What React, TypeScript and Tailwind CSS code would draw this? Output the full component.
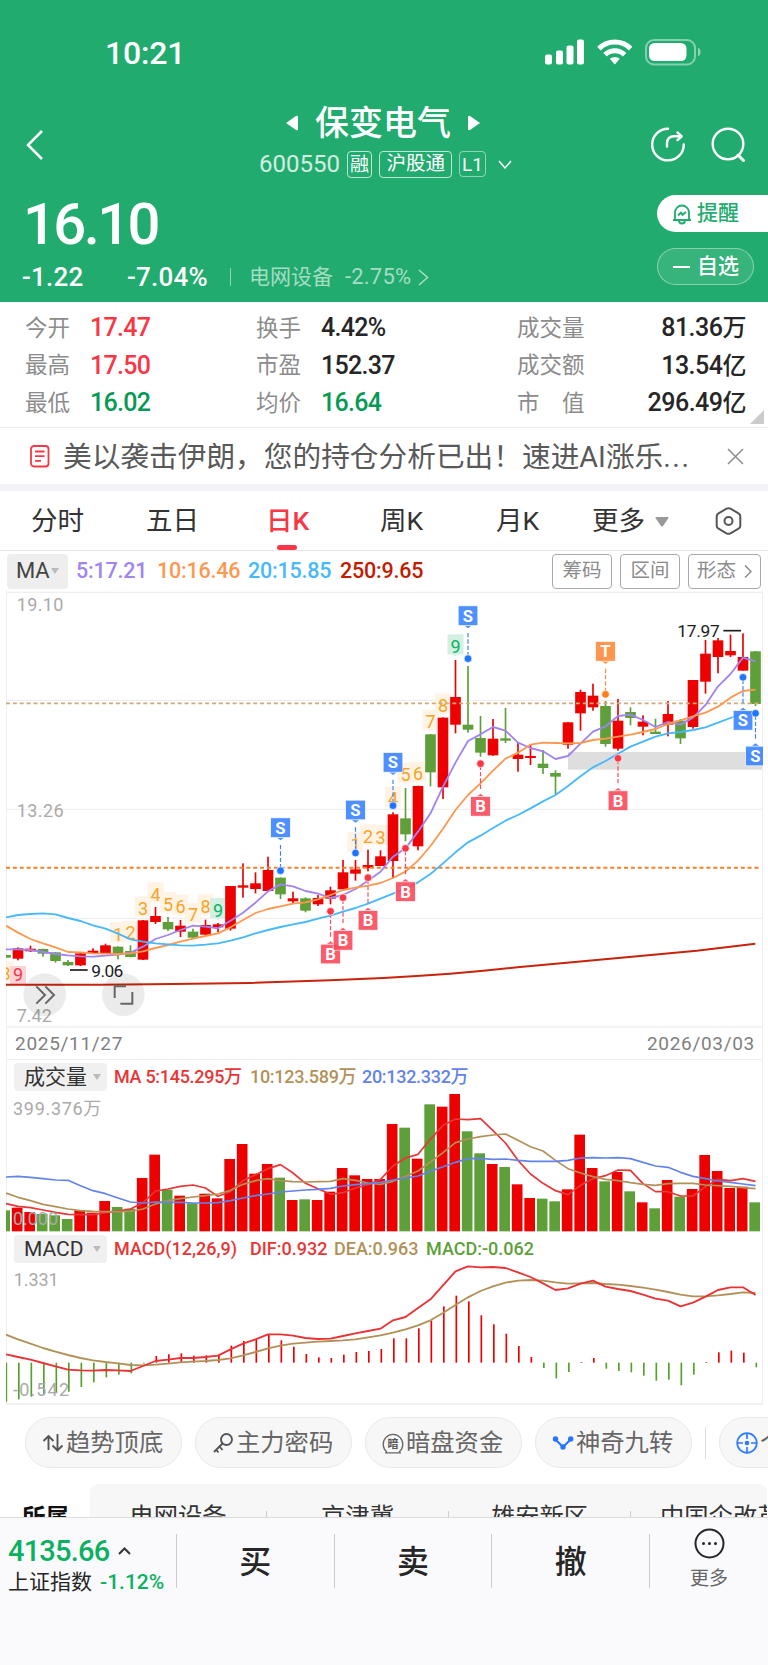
import type { ReactNode } from 'react'

interface Candle {
  up:     boolean
  high:   number
  top:    number
  bottom: number
  low:    number
}

// 'r' = 涨, 'g' = 跌; high / top / bottom / low in chart units (3 units = 1px)
const CANDLES: Candle[] = [
  'g 1095 1095 1103 1103', 'r 1072 1075 1106 1111', 'r 1067 1076 1084 1086', 'g 1076 1077 1091 1100',
  'g 1087 1087 1113 1118', 'g 1110 1116 1126 1128', 'r 1090 1090 1126 1128', 'r 1075 1082 1090 1092',
  'r 1061 1066 1089 1092', 'g 1069 1070 1094 1108', 'g 1066 1083 1101 1102', 'r 990 991 1109 1110',
  'r 951 978 996 1002', 'g 981 996 1018 1023', 'r 990 1007 1025 1041', 'g 1016 1025 1043 1045',
  'r 989 1005 1034 1036', 'r 999 1003 1012 1027', 'r 888 888 1016 1022', 'r 820 886 893 923',
  'r 847 880 897 910', 'r 800 840 903 906', 'g 862 863 913 927', 'r 905 925 934 941',
  'g 922 925 962 967', 'r 915 924 943 948', 'r 890 901 926 943', 'r 810 847 898 901',
  'r 810 838 851 872', 'r 779 825 834 844', 'r 781 799 828 828', 'r 667 673 813 865',
  'g 594 685 733 754', 'r 587 588 769 781', 'g 432 433 547 589', 'r 382 383 592 627',
  'r 210 321 404 430', 'g 228 404 419 428', 'g 378 444 488 500', 'r 387 446 496 497',
  'g 354 445 452 459', 'r 458 494 507 545', 'r 463 498 504 525', 'g 480 521 534 552',
  'g 541 549 560 612', 'r 396 397 464 476', 'r 299 306 370 422', 'r 281 317 352 362',
  'g 333 348 462 470', 'r 327 392 476 482', 'g 352 366 384 406', 'r 376 395 410 436',
  'g 386 425 432 432', 'r 333 372 404 439', 'g 387 392 445 462', 'r 270 270 411 416',
  'r 150 191 275 311', 'r 144 151 201 250', 'r 134 183 196 201', 'r 130 201 242 242',
  'g 183 184 342 348',
].map(row => {
  const [dir, high, top, bottom, low] = row.split(' ')
  return { up: dir === 'r', high: +high, top: +top, bottom: +bottom, low: +low }
})

const MA5 = [1078, 1078, 1080, 1086, 1092, 1096, 1099, 1100, 1097, 1094, 1088, 1070, 1047, 1035, 1020, 1007, 1010, 1015, 992, 968, 938, 904, 883, 889, 903, 911, 924, 915, 897, 872, 845, 800, 775, 725, 670, 590, 518, 453, 433, 411, 422, 458, 474, 484, 507, 498, 461, 425, 409, 378, 374, 390, 411, 396, 404, 383, 345, 289, 252, 203, 214]
const MA10 = [1007, 1028, 1047, 1060, 1072, 1086, 1087, 1090, 1091, 1092, 1090, 1084, 1074, 1065, 1055, 1046, 1038, 1030, 1012, 990, 969, 957, 949, 941, 937, 928, 915, 900, 893, 887, 879, 864, 845, 812, 768, 716, 660, 615, 580, 542, 506, 488, 464, 458, 459, 460, 459, 450, 446, 440, 434, 426, 417, 402, 391, 379, 368, 350, 323, 303, 299]
const MA20 = [982, 975, 972, 970, 973, 984, 993, 1006, 1016, 1031, 1048, 1055, 1060, 1063, 1066, 1067, 1064, 1060, 1052, 1042, 1030, 1020, 1011, 1003, 996, 986, 977, 965, 954, 941, 926, 911, 896, 877, 852, 820, 787, 757, 737, 714, 692, 675, 655, 634, 615, 588, 559, 532, 513, 491, 470, 455, 440, 430, 426, 420, 412, 398, 384, 371, 367]

const VOL = [541, 533, 546, 552, 556, 567, 541, 548, 513, 531, 536, 444, 374, 479, 497, 520, 491, 505, 387, 342, 431, 402, 443, 510, 508, 510, 485, 414, 436, 447, 447, 282, 293, 386, 223, 230, 192, 304, 370, 402, 411, 463, 504, 506, 514, 478, 314, 414, 454, 426, 484, 517, 535, 450, 500, 477, 375, 423, 474, 470, 517]
const VOL5 = [521, 529, 533, 540, 547, 553, 554, 554, 548, 543, 537, 518, 483, 477, 469, 465, 474, 499, 485, 452, 434, 416, 404, 429, 460, 476, 493, 488, 474, 464, 448, 408, 384, 373, 327, 286, 267, 269, 266, 302, 339, 391, 432, 460, 482, 494, 466, 446, 437, 420, 421, 461, 485, 485, 498, 498, 470, 448, 452, 446, 454]
const VOL10 = [489, 502, 512, 523, 530, 537, 542, 544, 545, 545, 544, 537, 522, 512, 506, 501, 497, 492, 481, 463, 452, 446, 452, 455, 456, 455, 454, 446, 451, 459, 463, 454, 439, 423, 396, 368, 338, 327, 320, 315, 312, 331, 350, 363, 391, 416, 429, 440, 448, 452, 458, 463, 466, 461, 460, 460, 465, 467, 469, 473, 476]
const VOL20 = [441, 439, 442, 446, 450, 451, 467, 482, 491, 504, 516, 519, 516, 517, 517, 519, 519, 518, 512, 504, 497, 492, 486, 483, 480, 478, 475, 468, 464, 461, 457, 450, 444, 438, 424, 410, 397, 386, 385, 388, 387, 391, 394, 394, 394, 391, 384, 383, 384, 383, 386, 397, 408, 412, 427, 439, 446, 453, 457, 462, 467]

const MACD = [1115, 1108, 1100, 1092, 1088, 1085, 1071, 1057, 1042, 1034, 1030, 1001, 978, 973, 970, 977, 976, 975, 947, 933, 928, 914, 931, 950, 972, 982, 984, 974, 966, 963, 957, 925, 925, 895, 872, 829, 797, 814, 856, 883, 911, 948, 981, 1014, 1045, 1026, 996, 984, 1016, 1023, 1027, 1037, 1052, 1049, 1066, 1034, 996, 967, 962, 968, 1012]
const DIF = [973, 981, 989, 999, 1009, 1019, 1021, 1022, 1020, 1021, 1023, 1008, 993, 989, 984, 984, 981, 977, 958, 941, 928, 913, 913, 917, 924, 927, 926, 918, 910, 903, 896, 871, 861, 834, 808, 766, 724, 709, 712, 711, 714, 727, 741, 760, 780, 775, 761, 752, 770, 777, 783, 794, 806, 812, 829, 818, 800, 780, 772, 772, 795]
const DEA = [914, 928, 941, 954, 965, 975, 984, 991, 996, 1000, 1005, 1006, 1004, 1001, 997, 995, 993, 990, 985, 976, 966, 955, 947, 941, 938, 935, 933, 931, 928, 922, 916, 908, 898, 886, 871, 849, 825, 802, 783, 769, 758, 752, 750, 752, 757, 761, 760, 759, 762, 764, 768, 773, 779, 786, 794, 799, 799, 796, 792, 787, 789]

// 九转序列: [index, digit, center y]
const NINE: [number, string, number][] = [
  [0, '8', 1150], [9, '1', 1032], [10, '2', 1028], [11, '3', 955], [12, '4', 912], [13, '5', 942],
  [14, '6', 950], [15, '7', 974], [16, '8', 949], [17, '9', 960], [28, '1', 762], [29, '2', 739],
  [30, '3', 741], [31, '4', 626], [32, '5', 554], [33, '6', 551], [34, '7', 395], [35, '8', 346],
  [36, '9', 169],
]

// 买卖点: [index, label, box center y, dot y]
const MARKS: [number, 'S' | 'B' | 'T', number, number][] = [
  [22, 'S', 713, 842], [28, 'S', 660, 789], [31, 'S', 517, 647], [37, 'S', 77, 206],
  [48, 'T', 184, 313], [59, 'S', 391, 262], [60, 'S', 498, 370],
  [26, 'B', 1092, 964], [27, 'B', 1051, 923], [29, 'B', 991, 863],
  [32, 'B', 905, 775], [38, 'B', 649, 521], [49, 'B', 632, 505],
]
const MARK_COLORS = {
  S: { box: '#3b84ff', dot: '#1f75ff' },
  B: { box: '#fa4b5c', dot: '#f93645' },
  T: { box: '#ff8a3c', dot: '#ff7d1a' },
}

const RED = '#ec0000'
const GREEN = '#5e9f3a'

const cx = (i: number) => 16.5 + 37.5 * i
const line = (ys: number[]) => ys.map((y, i) => `${i === 0 ? 18 : cx(i)},${y}`).join(' ')

function Line({ data, color, w = 5.5 }: { data: number[], color: string, w?: number }) {
  return <polyline points={line(data)} fill="none" stroke={color} strokeWidth={w} strokeLinejoin="round" />
}

function Mark({ i, label, y, dot }: { i: number, label: 'S' | 'B' | 'T', y: number, dot: number }) {
  const x = cx(i)
  const c = MARK_COLORS[label]
  const dir = dot > y ? 1 : -1
  const edge = y + dir * 29
  return (
    <g>
      <line x1={x} x2={x} y1={y + dir * 52} y2={dot} stroke={c.box} strokeWidth="3.5" strokeDasharray="13 6" />
      <circle cx={x} cy={dot} r="11.5" fill={c.dot} stroke="#fff" strokeWidth="2" />
      <g opacity="0.9">
        <path d={`M${x - 12} ${edge}L${x} ${edge + dir * 9}L${x + 12} ${edge}Z`} fill={c.box} />
        <rect x={x - 29.5} y={y - 29.5} width="59" height="59" fill={c.box} stroke="#fff" strokeWidth="2" />
      </g>
      <text x={x} y={y + 18} textAnchor="middle" fontSize="50" fontWeight="700" fill="#fff">{label}</text>
    </g>
  )
}

function KChart() {
  return (
    <svg viewBox="18 0 2271 1314" className="-mx-px block h-[438px] w-[757px]">
      {[7, 331, 658, 985, 1311].map(y => (
        <line key={y} x1="18" x2="2288" y1={y} y2={y} stroke="#efefef" strokeWidth="4" />
      ))}
      <rect x="1704" y="486" width="582" height="53" fill="#dedede" />
      <g fill="#aaa" fontSize="54">
        <text x="50" y="64" textLength="140">19.10</text>
        <text x="50" y="680" textLength="141">13.26</text>
        <text x="50" y="1296">7.42</text>
      </g>

      {NINE.map(([i, n, y]) => (
        <g key={i}>
          <rect x={cx(i) - 24} y={y - 36} width="48" height="60" fill={n === '9' ? '#d3f0e2' : '#fff3e6'} />
          <path d={`M${cx(i) - 9} ${y + 24}h18l-9 6z`} fill={n === '9' ? '#d3f0e2' : '#fff3e6'} />
          <text x={cx(i)} y={y + 20} textAnchor="middle" fontSize="54" fill={n === '9' ? '#0bb368' : '#f8a325'}>{n}</text>
        </g>
      ))}
      <rect x={cx(1) - 24} y="1128" width="48" height="54" fill="#fcd4d8" />
      <text x={cx(1)} y="1172" textAnchor="middle" fontSize="54" fill="#f23645">9</text>

      {CANDLES.map((c, i) => (
        <g key={i} fill={c.up ? RED : GREEN}>
          <rect x={cx(i) - 2.5} y={c.high} width="5" height={c.low - c.high} />
          <rect x={cx(i) - 16} y={c.top} width="32" height={c.bottom - c.top} />
        </g>
      ))}

      <line x1="18" x2="2280" y1="340" y2="340" stroke="#d2a978" strokeWidth="5" strokeDasharray="12 8.6" />
      <line x1="18" x2="2280" y1="833" y2="833" stroke="#f6802c" strokeWidth="6" strokeDasharray="12 8.6" />

      <Line data={MA5} color="#a183f2" />
      <Line data={MA10} color="#fd9850" />
      <Line data={MA20} color="#45b9fc" />
      <polyline
        points="18,1184 300,1184 520,1182 750,1179 990,1171 1150,1164 1250,1158 1350,1151 1450,1142 1560,1131 1700,1118 1920,1098 2090,1082 2266,1061"
        fill="none" stroke="#c8230c" strokeWidth="6"
      />

      {MARKS.map(([i, label, y, dot]) => <Mark key={i} i={i} label={label} y={y} dot={dot} />)}

      <g fill="#1c1c1c" fontSize="52">
        <line x1="210" x2="263" y1="1140" y2="1140" stroke="#1c1c1c" strokeWidth="5" />
        <text x="274" y="1161" textLength="96">9.06</text>
        <text x="2032" y="142" textLength="127">17.97</text>
        <line x1="2170" x2="2223" y1="122" y2="122" stroke="#1c1c1c" strokeWidth="5" />
      </g>

      <circle cx="134" cy="1214" r="64" fill="#000" opacity="0.08" />
      <path d="M109 1189l26 26l-26 26M136 1189l26 26l-26 26" fill="none" stroke="#666" strokeWidth="6" />
      <circle cx="370" cy="1214" r="64" fill="#000" opacity="0.08" />
      <path d="M378 1189h-34v35M397 1206v35h-36" fill="none" stroke="#666" strokeWidth="6" />
    </svg>
  )
}

function VolumeChart() {
  return (
    <svg viewBox="18 189 2271 417" className="-mx-px block h-[139px] w-[757px]">
      {VOL.map((y, i) => (
        <rect key={i} x={cx(i) - 18.5} y={y} width="32" height={604 - y} fill={CANDLES[i].up ? RED : GREEN} />
      ))}
      <Line data={VOL5} color="#e93535" w={5} />
      <Line data={VOL10} color="#b29159" w={5} />
      <Line data={VOL20} color="#6383ea" w={5} />
      <g fill="#aaa" fontSize="54">
        <text x="39" y="255" textLength="265">399.376万</text>
        <text x="39" y="585" textLength="135">0.000</text>
      </g>
    </svg>
  )
}

function MacdChart() {
  return (
    <svg viewBox="18 705 2271 420" className="-mx-px block h-[140px] w-[757px]">
      <line x1="18" x2="2288" y1="1122" y2="1122" stroke="#ececec" strokeWidth="5" />
      {MACD.map((y, i) => (
        <rect
          key={i} x={cx(i)} width="5"
          y={Math.min(y, 998)} height={Math.abs(y - 998)}
          fill={y < 998 ? RED : '#56a02c'}
        />
      ))}
      <Line data={DEA} color="#b29159" />
      <Line data={DIF} color="#ea3236" />
      <g fill="#aaa" fontSize="54">
        <text x="41" y="769" textLength="135">1.331</text>
        <text x="39" y="1099" textLength="168">-0.542</text>
      </g>
    </svg>
  )
}

function StatusBar() {
  return (
    <div className="flex h-[104px] items-center justify-between pl-[105px] pr-[67px] text-[32px] font-medium">
      <span className="mt-px tracking-[-0.200px]">10:21</span>
      <svg width="156" height="27" viewBox="0 0 156 27" fill="#fff">
        <rect x="0" y="15.5" width="7" height="10" rx="2" />
        <rect x="11" y="11.5" width="7" height="14" rx="2" />
        <rect x="21.5" y="6.5" width="7" height="19" rx="2" />
        <rect x="32" y="0.5" width="7" height="25" rx="2" />
        <g fill="none" stroke="#fff" strokeWidth="5">
          <path d="M54 9.6a22.5 22.5 0 0 1 31.600 0" />
          <path d="M60 15.800a14 14 0 0 1 19.600 0" />
        </g>
        <path d="M64.800 19.800a7.500 7.500 0 0 1 10 0l-5 5.700z" />
        <rect x="101" y="1" width="49" height="24.500" rx="8" fill="none" stroke="#fff" strokeWidth="2" opacity="0.45" />
        <rect x="104" y="4" width="37.500" height="18" rx="5.500" />
        <path d="M153 8.500c3.300 1 3.300 8 0 9z" opacity="0.5" />
      </svg>
    </div>
  )
}

function Header() {
  return (
    <header className="h-[302px] bg-[#21ab6e] text-white">
      <StatusBar />
      <div className="flex h-[82px] items-center">
        <svg width="20" height="30" viewBox="0 0 20 30" className="ml-[25px]" fill="none" stroke="#fff" strokeWidth="2.5">
          <path d="M17 1L3 15l14 14" />
        </svg>
        <div className="mb-[8px] ml-[214px] flex w-[253px] flex-col">
          <div className="flex items-center gap-[17px] pl-[27px]">
            <svg width="12" height="16" viewBox="0 0 12 16" fill="#fff"><path d="M0 8L10 1q2-1 2 1v12q0 2-2 1z" /></svg>
            <h1 className="text-[34px] font-medium leading-[38px]">保变电气</h1>
            <svg width="12" height="16" viewBox="0 0 12 16" fill="#fff"><path d="M12 8L2 1q-2-1-2 1v12q0 2 2 1z" /></svg>
          </div>
          <div className="mt-[8px] flex h-[28px] items-center">
            <span className="w-[88px] text-[24px] leading-none text-white/80">600550</span>
            <span className="flex h-[27px] w-[26px] items-center justify-center rounded border border-white/70 text-[19px] leading-none">融</span>
            <span className="ml-[7px] flex h-[27px] w-[73px] items-center justify-center rounded border border-white/70 text-[19.500px] leading-none">沪股通</span>
            <span className="ml-[7px] flex h-[26px] w-[27px] items-center justify-center rounded border border-white/50 text-[19px] leading-none">L1</span>
            <svg width="14" height="9" viewBox="0 0 14 9" className="ml-[12px] shrink-0" fill="none" stroke="#fff" strokeWidth="1.500"><path d="M1 1l6 7l6-7" /></svg>
          </div>
        </div>
        <svg width="36" height="36" viewBox="0 0 36 36" className="ml-[138px]" fill="none" stroke="#fff" strokeWidth="2.400" strokeLinecap="round" strokeLinejoin="round">
          <path d="M18 1.800A15.800 15.800 0 1 0 33.800 17.500" />
          <path d="M17 19.500v-3c0-5 3-7.300 7-7.300h7M27.500 5.500l4.200 3.800l-4.200 3.800" />
        </svg>
        <svg width="36" height="36" viewBox="0 0 36 36" className="ml-[24px]" fill="none" stroke="#fff" strokeWidth="2.400" strokeLinecap="round">
          <circle cx="18" cy="17" r="15.300" />
          <path d="M28 28l5.500 5.500" strokeWidth="3" />
        </svg>
      </div>

      <div className="flex h-[116px] justify-between">
        <div className="flex flex-col">
          <div className="ml-[23px] mt-[8px] h-[58px] text-[58px] font-medium leading-[60px] tracking-[-2.600px]">16.10</div>
          <div className="mt-[11px] flex h-[28px] items-center text-[26px] font-medium leading-none tracking-[0.200px]">
            <span className="ml-[22px] w-[105px]">-1.22</span>
            <span className="w-[103px]">-7.04%</span>
            <span className="h-[18px] w-px bg-white/50" />
            <span className="ml-[18px] w-[96px] text-[21px] font-normal tracking-normal text-white/60">电网设备</span>
            <span className="w-[73px] text-[22px] font-normal text-white/60">-2.75%</span>
            <svg width="11" height="17" viewBox="0 0 11 17" fill="none" stroke="#fff" strokeWidth="1.600" opacity="0.600"><path d="M1 1l8.500 7.500L1 16" /></svg>
          </div>
        </div>
        <div className="mt-[9px] flex w-[111px] flex-col">
          <div className="flex h-[37px] items-center gap-[5px] rounded-l-full bg-white pl-[15px] text-[21px] font-medium text-[#21ab6e]">
            <svg width="20" height="22" viewBox="0 0 20 22" fill="none" stroke="#21ab6e" strokeWidth="1.800" strokeLinejoin="round">
              <path d="M1 17h18M3 17V9.500a7 7 0 0 1 14 0V17M7 17.500a3 3 0 0 0 6 0" />
              <path d="M6 12.500l3-3l1.500 2.500l3.500-3" />
            </svg>
            提醒
          </div>
          <div className="mt-[16px] flex h-[37px] w-[97px] items-center gap-[7px] rounded-full border border-white/40 bg-white/10 pl-[15px] text-[21px] font-medium">
            <span className="h-[2px] w-[17px] bg-white" />
            自选
          </div>
        </div>
      </div>
    </header>
  )
}

function Stat({ label, value, color }: { label: string, value: string, color: string }) {
  return (
    <div className="flex h-[37.600px] items-center leading-none">
      <span className="w-[65px] text-[22.500px] text-[#8c8c8c]">{label}</span>
      <span className={`text-[25px] font-medium tracking-[-0.700px] ${color}`}>{value}</span>
    </div>
  )
}

function Stats() {
  const right = [['成交量', '81.36', '万'], ['成交额', '13.54', '亿'], ['市　值', '296.49', '亿']]
  return (
    <section className="relative flex h-[126px] border-b border-[#ebebeb] pt-[7px]">
      <div className="ml-[25px] w-[231px]">
        <Stat label="今开" value="17.47" color="text-[#f93645]" />
        <Stat label="最高" value="17.50" color="text-[#f93645]" />
        <Stat label="最低" value="16.02" color="text-[#069a55]" />
      </div>
      <div className="w-[261px]">
        <Stat label="换手" value="4.42%" color="text-[#262626]" />
        <Stat label="市盈" value="152.37" color="text-[#262626]" />
        <Stat label="均价" value="16.64" color="text-[#069a55]" />
      </div>
      <div className="w-[229px]">
        {right.map(([label, value, unit]) => (
          <div key={label} className="flex h-[37.600px] items-center justify-between leading-none">
            <span className="text-[22.500px] text-[#8c8c8c]">{label}</span>
            <span className="text-[25px] font-medium tracking-[-0.500px] text-[#262626]">{value}<span className="text-[24px]">{unit}</span></span>
          </div>
        ))}
      </div>
      <svg width="14" height="14" viewBox="0 0 14 14" className="absolute bottom-[3px] right-[4px]"><path d="M14 0v14H0z" fill="#ccc" /></svg>
    </section>
  )
}

function News() {
  return (
    <section className="flex h-[56px] items-center">
      <svg width="20" height="23" viewBox="0 0 20 23" className="ml-[30px]" fill="none" stroke="#f93645" strokeWidth="1.800">
        <rect x="1" y="1" width="17.500" height="20.500" rx="3" />
        <path d="M5 6.500h9.500M5 11.200h9.500M5 15.800h6" />
      </svg>
      <p className="ml-[13px] mt-[2px] w-[664px] whitespace-nowrap text-[28.700px] leading-none text-[#595959]">
        美以袭击伊朗，您的持仓分析已出！速进AI涨乐<span className="tracking-[1.500px]">...</span>
      </p>
      <svg width="17" height="17" viewBox="0 0 17 17" fill="none" stroke="#8c8c8c" strokeWidth="1.500"><path d="M1 1l15 15M16 1L1 16" /></svg>
    </section>
  )
}

function Tabs() {
  return (
    <nav className="flex h-[60px] items-center border-b border-[#e8e8e8] pt-[2px] text-[26.500px] leading-none text-[#333]">
      <span className="ml-[31px] w-[115px]">分时</span>
      <span className="w-[120px]">五日</span>
      <span className="relative w-[114px] font-medium text-[#f93645]">
        日K
        <span className="absolute -bottom-[15px] left-[11px] h-[5px] w-[20px] rounded bg-[#f93645]" />
      </span>
      <span className="w-[116px]">周K</span>
      <span className="w-[96px]">月K</span>
      <span className="w-[63px]">更多</span>
      <svg width="14" height="10" viewBox="0 0 14 10"><path d="M1 0h12q1 0 .5 1L8 9q-1 1-2 0L.500 1Q0 0 1 0z" fill="#999" /></svg>
      <svg width="27" height="28" viewBox="0 0 27 28" className="-mt-[2px] ml-[46px]" fill="none" stroke="#555" strokeWidth="2">
        <path d="M11.500 1.700q2-1 4 0l8 4.600q1.800 1 1.800 3v9.400q0 2-1.800 3l-8 4.600q-2 1-4 0l-8-4.600q-1.800-1-1.800-3V9.300q0-2 1.800-3z" />
        <circle cx="13.500" cy="14" r="4" />
      </svg>
    </nav>
  )
}

function MaRow() {
  return (
    <div className="flex h-[39px] items-center pt-px text-[21.500px] font-medium leading-none tracking-[-0.200px]">
      <div className="ml-[7px] flex h-[35px] w-[61px] items-center gap-[2px] rounded bg-[#eee] pl-[9px] text-[22px] font-normal text-[#444]">
        MA
        <svg width="8" height="6" viewBox="0 0 8 6"><path d="M0 0h8L4 6z" fill="#bbb" /></svg>
      </div>
      <span className="ml-[8px] w-[81px] text-[#a183f2]">5:17.21</span>
      <span className="w-[91px] text-[#fd9850]">10:16.46</span>
      <span className="w-[92px] text-[#45b9fc]">20:15.85</span>
      <span className="text-[#c41a00]">250:9.65</span>
      <div className="ml-auto mr-[7px] flex gap-[8px] text-[19.500px] font-normal tracking-normal text-[#8c8c8c]">
        <span className="flex h-[35px] w-[60px] items-center justify-center rounded border border-[#aaa]">筹码</span>
        <span className="flex h-[35px] w-[60px] items-center justify-center rounded border border-[#aaa]">区间</span>
        <span className="flex h-[35px] w-[73px] items-center justify-center gap-[8px] rounded border border-[#aaa]">
          形态
          <svg width="8" height="13" viewBox="0 0 8 13" fill="none" stroke="#8c8c8c" strokeWidth="1.500"><path d="M1 .500l6 6l-6 6" /></svg>
        </span>
      </div>
    </div>
  )
}

function IndicatorRow({ name, children }: { name: string, children: ReactNode }) {
  return (
    <div className="flex h-[33px] items-center pt-px text-[18px] font-medium leading-none">
      <div className="ml-[7px] mr-[7px] flex h-[28px] w-[93px] items-center justify-between rounded bg-[#f0f0f0] pl-[10px] pr-[6px] text-[21px] font-normal text-[#333]">
        {name}
        <svg width="8" height="6" viewBox="0 0 8 6"><path d="M0 0h8L4 6z" fill="#bbb" /></svg>
      </div>
      {children}
    </div>
  )
}

function Pill({ icon, text }: { icon: ReactNode, text: string }) {
  return (
    <div className="flex h-[51px] w-[157px] shrink-0 items-center gap-[2px] whitespace-nowrap rounded-full border border-[#e8e8e8] bg-[#f7f7f7] pl-[16px] pt-px text-[24.300px] leading-none text-[#666]">
      {icon}
      {text}
    </div>
  )
}

function Pills() {
  return (
    <div className="mt-[12px] flex gap-[13px] overflow-hidden pl-[25px]">
      <Pill text="趋势顶底" icon={
        <svg width="22" height="22" viewBox="0 0 22 22" fill="none" stroke="#555" strokeWidth="1.900">
          <path d="M6.500 18V4M1.500 9l5-5l5 5M15.500 2v16.500M10.500 13.500l5 5l5-5" />
        </svg>
      } />
      <Pill text="主力密码" icon={
        <svg width="22" height="22" viewBox="0 0 22 22" fill="none" stroke="#555" strokeWidth="1.900">
          <circle cx="14.500" cy="7.500" r="5.500" />
          <path d="M10.500 11.500L2 20M7.500 14.500l3 3.500M4 17.500l2.500 3" />
        </svg>
      } />
      <Pill text="暗盘资金" icon={
        <svg width="22" height="22" viewBox="0 0 22 22">
          <path d="M5 20A9.800 9.800 0 1 1 17 20M3 20.800h16" fill="none" stroke="#666" strokeWidth="1.300" />
          <text x="11" y="15.500" textAnchor="middle" fontSize="11" fontWeight="700" fill="#555">暗</text>
        </svg>
      } />
      <Pill text="神奇九转" icon={
        <svg width="22" height="22" viewBox="0 0 22 22" fill="#2673ff">
          <path d="M3 7l8 8l8-8" fill="none" stroke="#2673ff" strokeWidth="2" />
          <circle cx="3.500" cy="7" r="2.700" /><circle cx="18.700" cy="7" r="2.700" /><circle cx="11" cy="15" r="2.700" />
        </svg>
      } />
      <span className="mt-[10px] h-[32px] w-px shrink-0 bg-[#ddd]" />
      <Pill text="个股" icon={
        <svg width="22" height="22" viewBox="0 0 22 22" fill="none" stroke="#2f7bff" strokeWidth="1.700">
          <circle cx="11" cy="11" r="9.800" />
          <path d="M11 1v6M11 15v6M1 11h6M15 11h6" />
          <circle cx="11" cy="11" r="1.500" fill="#2f7bff" />
        </svg>
      } />
    </div>
  )
}

function Plates() {
  return (
    <div className="mt-[16px] flex h-[33px] overflow-hidden whitespace-nowrap text-[24.300px] text-[#333]">
      <span className="w-[90px] shrink-0 pl-[22px] text-[23.500px] font-bold leading-[69px] text-[#111]">所属</span>
      <div className="flex h-[65px] w-[677px] shrink-0 items-center overflow-hidden rounded-lg bg-[#f7f7f7] leading-none">
        <span className="w-[176px] shrink-0 pt-px text-center">电网设备</span>
        <span className="h-[11px] w-px shrink-0 bg-[#ccc]" />
        <span className="w-[181px] shrink-0 pt-px text-center">京津冀</span>
        <span className="h-[11px] w-px shrink-0 bg-[#ccc]" />
        <span className="w-[181px] shrink-0 pt-px text-center">雄安新区</span>
        <span className="h-[11px] w-px shrink-0 bg-[#ccc]" />
        <span className="shrink-0 pl-[29px] pt-px">中国企改革</span>
      </div>
    </div>
  )
}

function TradeBar() {
  return (
    <footer className="flex h-[148px] border-t border-[#dcdcdf] bg-[#fafafc] pt-[16px] text-[#262626]">
      <div className="flex h-[54px] w-[177px] flex-col border-r border-[#ccc] pl-[8px] leading-none">
        <div className="flex items-center gap-[9px] text-[29px] font-medium text-[#0cb063]">
          <span className="leading-[34px] tracking-[-0.800px]">4135.66</span>
          <svg width="13" height="8" viewBox="0 0 13 8" fill="none" stroke="#333" strokeWidth="2"><path d="M1 7l5.500-5.500L12 7" /></svg>
        </div>
        <div className="mt-[4px] flex items-center gap-[8px] text-[21px]">
          上证指数
          <span className="font-medium text-[#0cb063]">-1.12%</span>
        </div>
      </div>
      <div className="flex h-[54px] w-[473px] text-[32px] font-medium leading-none">
        <span className="flex flex-1 items-center justify-center border-r border-[#ccc] pt-[2px]">买</span>
        <span className="flex flex-1 items-center justify-center border-r border-[#ccc] pt-[2px]">卖</span>
        <span className="flex flex-1 items-center justify-center border-r border-[#ccc] pt-[2px]">撤</span>
      </div>
      <div className="flex w-[118px] flex-col items-center text-[19px] leading-none text-[#666]">
        <svg width="31" height="31" viewBox="0 0 31 31" className="-mt-[6px] mb-[10px]" fill="#262626">
          <circle cx="15.500" cy="15.500" r="14" fill="none" stroke="#262626" strokeWidth="2" />
          <circle cx="9.500" cy="15.500" r="1.500" /><circle cx="15.500" cy="15.500" r="1.500" /><circle cx="21.500" cy="15.500" r="1.500" />
        </svg>
        更多
      </div>
    </footer>
  )
}

export default function App() {
  return (
    <div className="flex h-[1665px] w-[768px] flex-col overflow-hidden bg-white font-['Roboto','Noto_Sans_CJK_SC',sans-serif]">
      <Header />
      <Stats />
      <News />
      <div className="h-[7px] bg-[#f2f3f8]" />
      <Tabs />
      <MaRow />

      {/* K线 / 成交量 / MACD */}
      <div className="ml-[6px] h-[815px] w-[757px] border-x border-[#efefef]">
        <KChart />
        <div className="flex h-[32px] items-center justify-between border-b border-[#efefef] pl-[8px] pr-[7px] text-[19px] leading-none tracking-[0.700px] text-[#808080]">
          <span>2025/11/27</span>
          <span>2026/03/03</span>
        </div>
        <IndicatorRow name="成交量">
          <span className="w-[136px] tracking-[-0.300px] text-[#e93535]">MA 5:145.295万</span>
          <span className="w-[112px] tracking-[-0.300px] text-[#b29159]">10:123.589万</span>
          <span className="tracking-[-0.300px] text-[#6383ea]">20:132.332万</span>
        </IndicatorRow>
        <VolumeChart />
        <IndicatorRow name="MACD">
          <span className="w-[136px] text-[#e93535]">MACD(12,26,9)</span>
          <span className="w-[84px] text-[#e93535]">DIF:0.932</span>
          <span className="w-[92px] text-[#b29159]">DEA:0.963</span>
          <span className="text-[#5e9f3a]">MACD:-0.062</span>
        </IndicatorRow>
        <MacdChart />
      </div>

      <Pills />
      <Plates />
      <TradeBar />
    </div>
  )
}
